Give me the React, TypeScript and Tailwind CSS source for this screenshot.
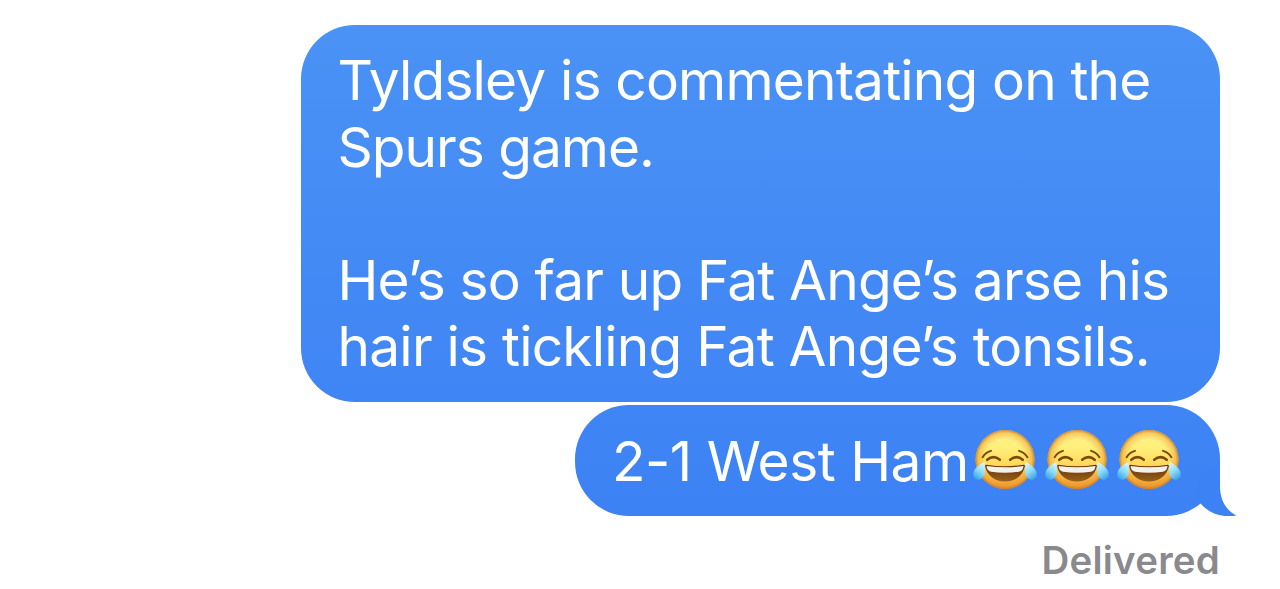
type Line = { text: string; tracking: string };

const lines: Line[] = [
  { text: "Tyldsley is commentating on the", tracking: "tracking-[-0.83px]" },
  { text: "Spurs game.", tracking: "tracking-[-1px]" },
  { text: "", tracking: "" },
  { text: "He’s so far up Fat Ange’s arse his", tracking: "tracking-[-0.83px]" },
  { text: "hair is tickling Fat Ange’s tonsils.", tracking: "tracking-[-0.78px]" },
];

function JoyEmoji({ id }: { id: string }) {
  return (
    <svg role="img" aria-label="face with tears of joy" viewBox="0 0 72 64" className="h-16 w-[72px] shrink-0">
      <defs>
        <linearGradient id={`${id}-face`} x1="0" y1="0" x2="0" y2="1">
          <stop offset="0" stopColor="#fff18a" />
          <stop offset="0.3" stopColor="#ffef7c" />
          <stop offset="0.55" stopColor="#ffdc5e" />
          <stop offset="0.8" stopColor="#f9bb4a" />
          <stop offset="1" stopColor="#ee9a35" />
        </linearGradient>
        <radialGradient id={`${id}-rim`}>
          <stop offset="0.68" stopColor="#e88a20" stopOpacity="0" />
          <stop offset="0.9" stopColor="#e88a20" stopOpacity="0.38" />
          <stop offset="1" stopColor="#c9751f" stopOpacity="0.85" />
        </radialGradient>
        <linearGradient id={`${id}-mouth`} x1="0" y1="0" x2="0" y2="1">
          <stop offset="0" stopColor="#633209" />
          <stop offset="1" stopColor="#986019" />
        </linearGradient>
        <linearGradient id={`${id}-tear`} x1="0.8" y1="0" x2="0.3" y2="1">
          <stop offset="0" stopColor="#d9f7fa" />
          <stop offset="0.5" stopColor="#8fdcf5" />
          <stop offset="1" stopColor="#35a5e8" />
        </linearGradient>
      </defs>

      <circle cx="36" cy="32" r="29.5" fill={`url(#${id}-face)`} />
      <circle cx="36" cy="32" r="29.5" fill={`url(#${id}-rim)`} />

      {/* brows and closed eyes */}
      <g fill="none" stroke="#7b4a0c" strokeLinecap="round">
        <path d="M13.6 29.8Q16.4 24.9 22 23.3M58.4 29.8Q55.6 24.9 50 23.3" strokeWidth="1.9" />
        <path d="M18.3 32.3Q24.3 27.1 30.8 32.3M41.2 32.3Q47.7 27.1 53.7 32.3" strokeWidth="2.6" />
      </g>

      {/* mouth */}
      <path
        d="M17.2 37.3Q36 40.3 54.8 37.3Q56.2 37.3 55.8 39.2C53.5 48.6 46 53.9 36 53.9S18.5 48.6 16.2 39.2Q15.8 37.3 17.2 37.3Z"
        fill={`url(#${id}-mouth)`}
      />
      <path
        d="M17.6 38.6Q36 41 54.4 38.6C54.5 41.6 52.8 43.7 50 44.2Q36 46.4 22 44.2C19.2 43.7 17.5 41.6 17.6 38.6Z"
        fill="#f3f1ee"
      />

      {/* tears */}
      <g fill={`url(#${id}-tear)`}>
        <path id={`${id}-drop`} d="M15.4 34.6C9.5 37.3 4.6 41.8 4.3 46.3C4 50 6.3 52.3 9.3 52.2C13 52 15.7 48.8 16 44.6Q16.1 39.3 15.4 34.6Z" />
        <use href={`#${id}-drop`} transform="matrix(-1 0 0 1 72 0)" />
      </g>
    </svg>
  );
}

export default function App() {
  return (
    <main className="flex h-[589px] w-[1280px] flex-col items-end overflow-hidden bg-white pt-[25px] pr-[60px] font-[Inter,sans-serif]">
      <div className="h-[377px] w-[919px] rounded-[54px] bg-linear-to-b from-[#4a92f5] to-[#4085f5] pt-[22px] pl-[36.5px] text-[55px] leading-[66.5px] text-white">
        {lines.map((line, i) => (
          <p key={i} className={`h-[66.5px] whitespace-nowrap ${line.tracking}`}>
            {line.text}
          </p>
        ))}
      </div>

      <div className="relative mt-[3px] flex h-[111px] w-[645px] items-center rounded-[54px] bg-linear-to-b from-[#4085f5] to-[#3d82f4] pl-[37px]">
        <span className="w-[356.5px] shrink-0 whitespace-nowrap text-[55px] leading-[66px] tracking-[-0.5px] text-white">
          2-1 West Ham
        </span>
        <span className="flex -translate-y-[1.5px]">
          <JoyEmoji id="joy-a" />
          <JoyEmoji id="joy-b" />
          <JoyEmoji id="joy-c" />
        </span>
        {/* bubble tail */}
        <svg viewBox="0 0 60 60" className="absolute -right-[17px] bottom-0 size-[60px]">
          <path d="M43 6V30C43 44 49 54.5 59.5 59.5C46 62 33 58 24.5 48.5L20 44V20Z" fill="#3d82f4" />
        </svg>
      </div>

      <p className="mt-[21px] text-[38.5px] leading-[46px] font-semibold tracking-[0.2px] text-[#8a8a8e]">Delivered</p>
    </main>
  );
}
